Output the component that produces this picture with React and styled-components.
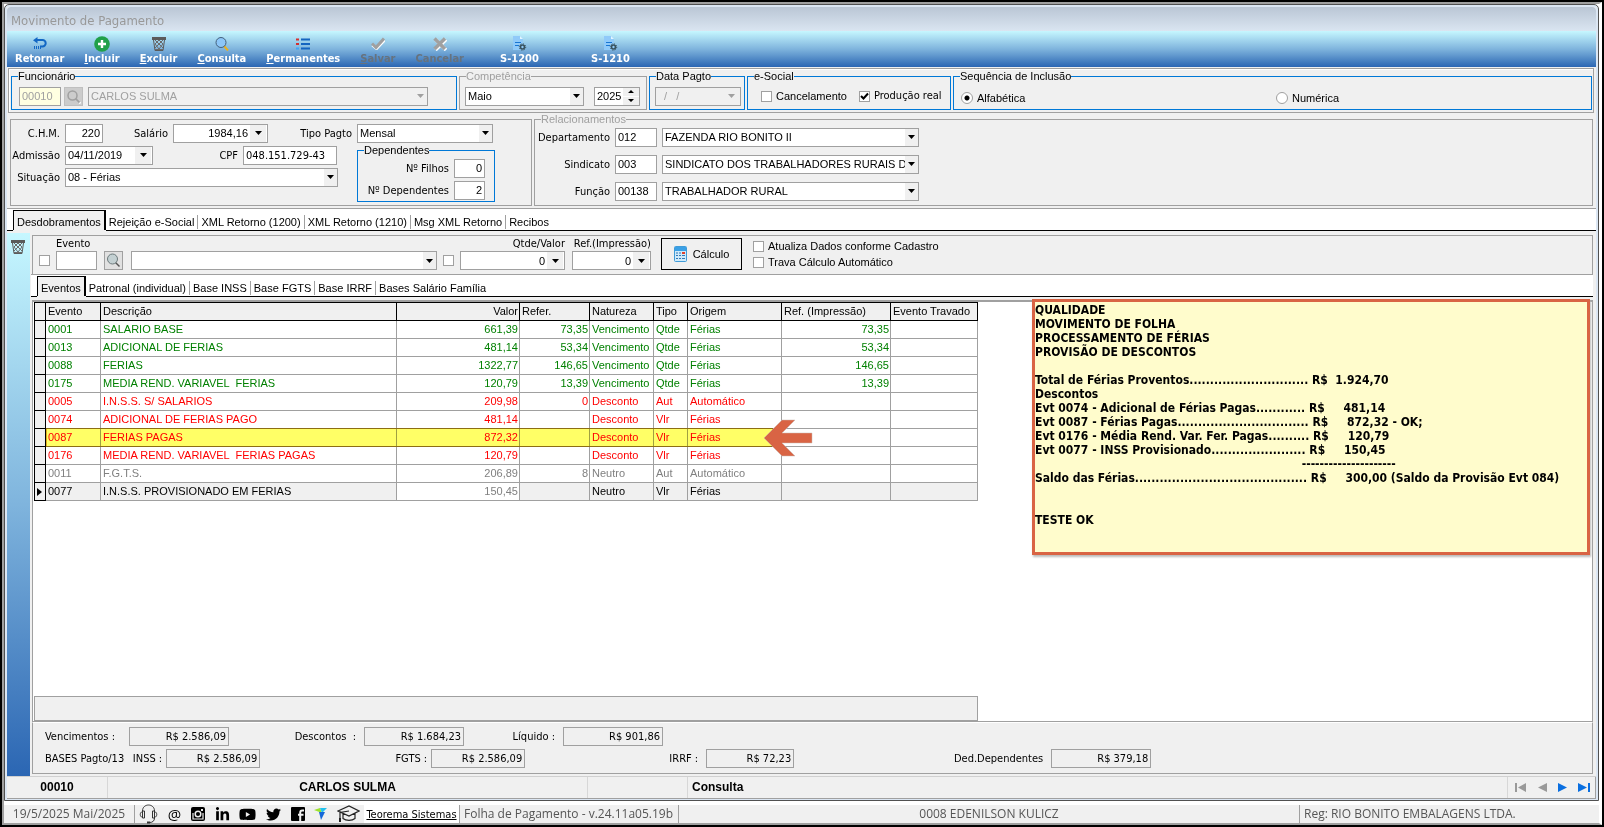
import React from "react";
import styled, { createGlobalStyle, css } from "styled-components";
import { FaLinkedinIn, FaYoutube, FaTwitter } from "react-icons/fa";

const TAHOMA = `"DejaVu Sans Condensed", "DejaVu Sans", sans-serif`;
const SYSTEM = `"Liberation Sans", Arial, sans-serif`;

const GRAY = "#a0a0a0";
const FACE = "#f0f0f0";
const BLUE = "#0078d7";

const actions = [
  { text: "Retornar", icon: "back" },
  { text: "Incluir", icon: "plus", underlined: true },
  { text: "Excluir", icon: "trash", underlined: true },
  { text: "Consulta", icon: "search", underlined: true },
  { text: "Permanentes", icon: "list", underlined: true },
  { text: "Salvar", icon: "check", underlined: true, disabled: true },
  { text: "Cancelar", icon: "cross", disabled: true },
  { text: "S-1200", icon: "doc", wide: true },
  { text: "S-1210", icon: "doc", wide: true },
];

const pageTabs = [
  "Desdobramentos",
  "Rejeição e-Social",
  "XML Retorno (1200)",
  "XML Retorno (1210)",
  "Msg XML Retorno",
  "Recibos",
];

const eventTabs = [
  "Eventos",
  "Patronal (individual)",
  "Base INSS",
  "Base FGTS",
  "Base IRRF",
  "Bases Salário Família",
];

const columns = [
  { name: "", width: 11 },
  { name: "Evento", width: 55 },
  { name: "Descrição", width: 296 },
  { name: "Valor", width: 123, right: true },
  { name: "Refer.", width: 70 },
  { name: "Natureza", width: 64 },
  { name: "Tipo", width: 34 },
  { name: "Origem", width: 94 },
  { name: "Ref. (Impressão)", width: 109 },
  { name: "Evento Travado", width: 87 },
];

const rows = [
  ["green", "0001", "SALARIO BASE", "661,39", "73,35", "Vencimento", "Qtde", "Férias", "73,35"],
  ["green", "0013", "ADICIONAL DE FERIAS", "481,14", "53,34", "Vencimento", "Qtde", "Férias", "53,34"],
  ["green", "0088", "FERIAS", "1322,77", "146,65", "Vencimento", "Qtde", "Férias", "146,65"],
  ["green", "0175", "MEDIA REND. VARIAVEL  FERIAS", "120,79", "13,39", "Vencimento", "Qtde", "Férias", "13,39"],
  ["red", "0005", "I.N.S.S. S/ SALARIOS", "209,98", "0", "Desconto", "Aut", "Automático", ""],
  ["red", "0074", "ADICIONAL DE FERIAS PAGO", "481,14", "", "Desconto", "Vlr", "Férias", ""],
  ["red", "0087", "FERIAS PAGAS", "872,32", "", "Desconto", "Vlr", "Férias", ""],
  ["red", "0176", "MEDIA REND. VARIAVEL  FERIAS PAGAS", "120,79", "", "Desconto", "Vlr", "Férias", ""],
  ["gray", "0011", "F.G.T.S.", "206,89", "8", "Neutro", "Aut", "Automático", ""],
  ["black", "0077", "I.N.S.S. PROVISIONADO EM FERIAS", "150,45", "", "Neutro", "Vlr", "Férias", ""],
];

const note = `QUALIDADE
MOVIMENTO DE FOLHA
PROCESSAMENTO DE FÉRIAS
PROVISÃO DE DESCONTOS

Total de Férias Proventos............................. R$  1.924,70
Descontos
Evt 0074 - Adicional de Férias Pagas............ R$     481,14
Evt 0087 - Férias Pagas................................ R$     872,32 - OK;
Evt 0176 - Média Rend. Var. Fer. Pagas.......... R$     120,79
Evt 0077 - INSS Provisionado....................... R$     150,45
                                                                       ---------------------
Saldo das Férias.......................................... R$     300,00 (Saldo da Provisão Evt 084)


TESTE OK`;

const Icon = ({ name }) => {
  switch (name) {
    case "back":
      return (
        <svg width="16" height="14" viewBox="0 0 16 14">
          <path d="M4 3h6.500a3.200 3.200 0 0 1 0 6.400H8" fill="none" stroke="#1267c4" strokeWidth="2" />
          <path d="M5.500 0v6.500L1 3.200z" fill="#1267c4" />
          <path d="M2.500 9v3M4.500 9v3M6.500 9v3M8.500 9v3" stroke="#1267c4" />
        </svg>
      );
    case "plus":
      return (
        <svg width="16" height="16" viewBox="0 0 16 16">
          <circle cx="8" cy="8" r="7.800" fill="#21a04a" />
          <path d="M8 4v8M4 8h8" stroke="#fff" strokeWidth="2.400" />
        </svg>
      );
    case "trash":
      return (
        <svg width="14" height="14" viewBox="0 0 14 14">
          <path d="M0 0h14v3H0z" fill="#5a5a5a" />
          <path d="M1.500 3l1.500 10.500h8L12.500 3" fill="none" stroke="#5a5a5a" />
          <path d="M3 3l8 8M11 3l-8 8M7 3l4 4-4 5-4-5zM3 12.500h8" fill="none" stroke="#6a6a6a" />
        </svg>
      );
    case "search":
      return (
        <svg width="14" height="14" viewBox="0 0 14 14">
          <path d="M9 9l4 4.500" stroke="#e8b023" strokeWidth="2" />
          <circle cx="6" cy="5.500" r="5" fill="#8cc6f8" stroke="#44607c" />
        </svg>
      );
    case "list":
      return (
        <svg width="14" height="12" viewBox="0 0 14 12">
          <path d="M0 1.500h3M0 6h3" stroke="#d32f2f" strokeWidth="2" />
          <path d="M0 10.500h3" stroke="#42a5f5" strokeWidth="2" />
          <path d="M5 1.500h9M5 6h9M5 10.500h9" stroke="#1565c0" strokeWidth="2" />
        </svg>
      );
    case "check":
      return (
        <svg width="14" height="13" viewBox="0 0 14 13">
          <path d="M1.500 8l4 3.500L13.500 3" fill="none" stroke="#fff" strokeWidth="3" />
          <path d="M1 6.500l4 4L13 1.500" fill="none" stroke="#a0a0a0" strokeWidth="3" />
        </svg>
      );
    case "cross":
      return (
        <svg width="14" height="14" viewBox="0 0 14 14">
          <path d="M2.500 2.500l10.500 10.500M13 2.500L2.500 13" stroke="#fff" strokeWidth="3.500" />
          <path d="M1.500 1.500l10.500 10.500M12 1.500L1.500 12" stroke="#a0a0a0" strokeWidth="3.500" />
        </svg>
      );
    case "doc":
      return (
        <svg width="14" height="15" viewBox="0 0 14 15">
          <path d="M0 0h7l3 3v11H0z" fill="#90caf9" />
          <path d="M7 0l3 3H7z" fill="#e1f5fe" />
          <path d="M2 6.500h6M2 9.500h4" stroke="#1976d2" strokeWidth="1.200" />
          <circle cx="9.500" cy="11" r="2" fill="none" stroke="#37515d" strokeWidth="1.600" />
          <circle cx="9.500" cy="11" r="3.200" fill="none" stroke="#37515d" strokeDasharray="1.200 1.300" />
        </svg>
      );
    case "lens":
      return (
        <svg width="15" height="15" viewBox="0 0 15 15">
          <path d="M9.500 9.500l4 4" stroke="#555" strokeWidth="1.500" />
          <circle cx="6.500" cy="6" r="5" fill="#c3d0d2" stroke="#6d7a7c" />
        </svg>
      );
    case "lensOff":
      return (
        <svg width="15" height="15" viewBox="0 0 15 15">
          <path d="M10.500 10.500l4 4" stroke="#fff" strokeWidth="2" />
          <path d="M9.500 9.500l4 4" stroke="#a0a0a0" strokeWidth="2" />
          <circle cx="6.500" cy="6.500" r="4.500" fill="#ccc" stroke="#a0a0a0" strokeWidth="1.500" />
        </svg>
      );
    case "calc":
      return (
        <svg width="13" height="16" viewBox="0 0 13 16">
          <rect x="0.500" y="0.500" width="12" height="15" rx="1" fill="#cfeafa" stroke="#3f9bd8" />
          <path d="M1 1h11v4H1z" fill="#3aa0e6" />
          <path d="M2 7h2M5 7h2M2 9.500h2M5 9.500h2M2 12.500h2M5 12.500h2M8 9.500h3M8 12.500h3" stroke="#3178b8" />
          <path d="M8 7h3" stroke="#e0402c" strokeWidth="2" />
        </svg>
      );
    case "headset":
      return (
        <svg width="19" height="20" viewBox="0 0 19 20" fill="none" stroke="#333">
          <path d="M3.500 7c0-8 12-8 12 0M5.500 7v7h-2V7zM13.500 7v7h2V7zM3.500 7.500c-3 1-3 5 0 6M15.500 7.500c3 1 3 5 0 6M15.500 14c0 3-2 4.500-5 4.500" />
          <path d="M8 18.500h3" strokeWidth="2" />
        </svg>
      );
    case "instagram":
      return (
        <svg width="14" height="14" viewBox="0 0 14 14">
          <rect width="14" height="14" rx="2" />
          <path d="M2 6v6h10V6" fill="none" stroke="#f0f0f0" strokeWidth="1.200" />
          <circle cx="7" cy="7" r="2.800" stroke="#f0f0f0" strokeWidth="1.500" />
          <path d="M10 2h2v2h-2z" fill="#f0f0f0" />
        </svg>
      );
    case "facebook":
      return (
        <svg width="14" height="14" viewBox="0 0 14 14">
          <rect width="14" height="14" rx="1" />
          <path d="M9.200 14V5.500q0-2 2-2H13M7 7.800h5.500" fill="none" stroke="#f0f0f0" strokeWidth="2" />
        </svg>
      );
    case "bird":
      return (
        <svg width="13" height="12" viewBox="0 0 13 12">
          <path d="M0 2l6-2 2 5z" fill="#9be22d" />
          <path d="M6 0h7L8 5z" fill="#22c1ee" />
          <path d="M5 4h6l-4 8z" fill="#1668d8" />
        </svg>
      );
    case "cap":
      return (
        <svg width="23" height="18" viewBox="0 0 23 18" fill="none" stroke="#222" strokeWidth="1.200">
          <path d="M1 6l11-5 10 5-10 5zM6 8.500v5c3 2.500 9 2.500 12 0v-5M12 6L3 7.500V14" />
          <path d="M3 13v4" strokeWidth="2" />
        </svg>
      );
    default:
      return null;
  }
};

const Arrow = ({ off }) => (
  <svg width="7" height="4" viewBox="0 0 7 4">
    <path d="M0 0h7L3.500 4z" fill={off ? GRAY : "#000"} />
  </svg>
);

const Combo = ({ id, value, width, disabled, label }) => (
  <ComboBox $width={width} $off={disabled}>
    <select id={id} disabled={disabled} aria-label={label}>
      <option>{value}</option>
    </select>
    <span>
      <Arrow off={disabled} />
    </span>
  </ComboBox>
);

const Picker = ({ id, value, width, disabled, right, label }) => (
  <PickerBox $width={width} $off={disabled} $right={right}>
    <input id={id} defaultValue={value} disabled={disabled} aria-label={label} />
    <button disabled={disabled} aria-label="Abrir">
      <Arrow off={disabled} />
    </button>
  </PickerBox>
);

const Tabs = ({ items }) => (
  <TabBar role="tablist">
    {items.map((text, i) => (
      <Tab key={text} role="tab" aria-selected={i === 0} $active={i === 0}>
        <span>{text}</span>
      </Tab>
    ))}
  </TabBar>
);

const Total = ({ id, label, value, labelWidth, width, gap = 8 }) => (
  <TotalItem $labelWidth={labelWidth} $gap={gap}>
    <label htmlFor={id}>{label}</label>
    <TextBox id={id} readOnly value={value} $width={width} $right $face $tahoma />
  </TotalItem>
);

export default function App() {
  return (
    <Desktop>
      <GlobalStyle />
      <Shell>
        <Window>
          <TitleBar>Movimento de Pagamento</TitleBar>
          <ToolBar>
            {actions.map(({ text, icon, underlined, disabled, wide }) => (
              <ToolButton key={text} disabled={disabled} $wide={wide}>
                <i>
                  <Icon name={icon} />
                </i>
                <span>
                  {underlined ? <u>{text[0]}</u> : text[0]}
                  {text.slice(1)}
                </span>
              </ToolButton>
            ))}
          </ToolBar>

          <Header>
            <Group $width={446} $blue>
              <legend>Funcionário</legend>
              <Line $tall $pad={7} $gap={3}>
                <TextBox aria-label="Código" defaultValue="00010" disabled $width={42} $cream />
                <IconButton disabled aria-label="Pesquisar">
                  <Icon name="lensOff" />
                </IconButton>
                <Combo label="Funcionário" value="CARLOS SULMA" width={340} disabled />
              </Line>
            </Group>
            <Group $width={188} $muted>
              <legend>Competência</legend>
              <Line $tall $pad={5} $gap={10}>
                <Combo label="Mês" value="Maio" width={119} />
                <YearBox>
                  <input aria-label="Ano" defaultValue="2025" />
                  <svg width="16" height="17" viewBox="0 0 16 17">
                    <path d="M0 0h16v8H0zM0 9h16v8H0z" fill={FACE} />
                    <path d="M5 5h6L8 2zM5 11h6l-3 3z" />
                  </svg>
                </YearBox>
              </Line>
            </Group>
            <Group $width={96} $blue>
              <legend>Data Pagto</legend>
              <Line $tall $pad={5}>
                <Picker label="Data Pagto" value="  /   /" width={86} disabled />
              </Line>
            </Group>
            <Group $width={204} $blue>
              <legend>e-Social</legend>
              <Line $tall $pad={13} $gap={12}>
                <Check>
                  <input type="checkbox" />
                  Cancelamento
                </Check>
                <Check $tahoma>
                  <input type="checkbox" defaultChecked />
                  Produção real
                </Check>
              </Line>
            </Group>
            <Group $blue $grow>
              <legend>Sequência de Inclusão</legend>
              <RadioLine>
                <Check>
                  <input type="radio" name="seq" defaultChecked />
                  Alfabética
                </Check>
                <Check>
                  <input type="radio" name="seq" />
                  Numérica
                </Check>
              </RadioLine>
            </Group>
          </Header>

          <Details>
            <Contract>
              <Line $gap={5}>
                <Label htmlFor="chm" $width={49}>C.H.M.</Label>
                <TextBox id="chm" defaultValue="220" $width={38} $right />
                <Label htmlFor="salario" $width={60}>Salário</Label>
                <Picker id="salario" value="1984,16" width={95} right />
                <Label htmlFor="tipo" $width={79}>Tipo Pagto</Label>
                <Combo id="tipo" value="Mensal" width={136} />
              </Line>
              <ContractBody>
                <Stack>
                  <Line $gap={5}>
                    <Label htmlFor="admissao" $width={49}>Admissão</Label>
                    <Picker id="admissao" value="04/11/2019" width={88} />
                    <Label htmlFor="cpf" $width={80}>CPF</Label>
                    <TextBox id="cpf" defaultValue="048.151.729-43" $width={94} $tahoma />
                  </Line>
                  <Line $gap={5}>
                    <Label htmlFor="situacao" $width={49}>Situação</Label>
                    <Combo id="situacao" value="08 - Férias" width={273} />
                  </Line>
                </Stack>
                <Group $width={138} $blue>
                  <legend>Dependentes</legend>
                  <Stack>
                    <Line $gap={5}>
                      <Label htmlFor="filhos" $width={91}>Nº Filhos</Label>
                      <TextBox id="filhos" defaultValue="0" $width={31} $right />
                    </Line>
                    <Line $gap={5}>
                      <Label htmlFor="deps" $width={91}>Nº Dependentes</Label>
                      <TextBox id="deps" defaultValue="2" $width={31} $right />
                    </Line>
                  </Stack>
                </Group>
              </ContractBody>
            </Contract>
            <Group $muted $grow>
              <legend>Relacionamentos</legend>
              <Relations>
                <Line $gap={5}>
                  <Label htmlFor="depto" $width={75}>Departamento</Label>
                  <TextBox id="depto" defaultValue="012" $width={42} />
                  <Combo label="Departamento" value="FAZENDA RIO BONITO II" width={257} />
                </Line>
                <Line $gap={5}>
                  <Label htmlFor="sind" $width={75}>Sindicato</Label>
                  <TextBox id="sind" defaultValue="003" $width={42} />
                  <Combo label="Sindicato" value="SINDICATO DOS TRABALHADORES RURAIS D" width={257} />
                </Line>
                <Line $gap={5}>
                  <Label htmlFor="func" $width={75}>Função</Label>
                  <TextBox id="func" defaultValue="00138" $width={42} />
                  <Combo label="Função" value="TRABALHADOR RURAL" width={257} />
                </Line>
              </Relations>
            </Group>
          </Details>

          <Tabs items={pageTabs} />
          <Body>
            <Rail>
              <button aria-label="Excluir evento">
                <Icon name="trash" />
              </button>
            </Rail>
            <Main>
              <Filter>
                <Tick type="checkbox" aria-label="Filtrar evento" />
                <Field $width={41}>
                  <label htmlFor="evento">Evento</label>
                  <TextBox id="evento" $width={41} />
                </Field>
                <IconButton aria-label="Pesquisar evento">
                  <Icon name="lens" />
                </IconButton>
                <Combo label="Evento" value="" width={306} />
                <Tick type="checkbox" aria-label="Filtrar valor" />
                <Field $width={105} $right>
                  <label htmlFor="qtde">Qtde/Valor</label>
                  <Picker id="qtde" value="0" width={105} right />
                </Field>
                <Field $width={79} $right>
                  <label htmlFor="ref">Ref.(Impressão)</label>
                  <Picker id="ref" value="0" width={79} right />
                </Field>
                <CalcButton>
                  <Icon name="calc" />
                  Cálculo
                </CalcButton>
                <Options>
                  <Check>
                    <input type="checkbox" />
                    Atualiza Dados conforme Cadastro
                  </Check>
                  <Check>
                    <input type="checkbox" />
                    Trava Cálculo Automático
                  </Check>
                </Options>
              </Filter>
              <Tabs items={eventTabs} />

              <GridArea>
                <Table>
                  <colgroup>
                    {columns.map(({ name, width }) => (
                      <col key={name} width={width} />
                    ))}
                  </colgroup>
                  <thead>
                    <tr>
                      {columns.map(({ name, right }) => (
                        <Th key={name} $right={right}>{name}</Th>
                      ))}
                    </tr>
                  </thead>
                  <tbody>
                    {rows.map(([color, code, text, value, ref, kind, type, origin, print]) => {
                      const current = code === "0077";
                      return (
                        <Row key={code} $color={color} $current={current}>
                          <td>
                            {current && (
                              <svg width="5" height="8" viewBox="0 0 5 8">
                                <path d="M0 0l5 4-5 4z" />
                              </svg>
                            )}
                          </td>
                          <td>{code}</td>
                          <td>{text}</td>
                          <td>{value}</td>
                          <td>{ref}</td>
                          <td>{kind}</td>
                          <td>{type}</td>
                          <td>{origin}</td>
                          <td>{print}</td>
                          <td />
                        </Row>
                      );
                    })}
                  </tbody>
                </Table>
                <Marker />
                <Pointer width="50" height="39" viewBox="0 0 50 39">
                  <path d="M0 19L18 1h13L18 14h30v10H18l13 13H18z" fill="#d96444" stroke="#c9b9b2" strokeWidth="0.500" />
                </Pointer>
                <Note>{note}</Note>
                <GridFooter />
              </GridArea>

              <Totals>
                <TotalLine>
                  <Total id="venc" label="Vencimentos :" value="R$ 2.586,09" labelWidth={84} width={100} gap={14} />
                  <Total id="desc" label="Descontos  :" value="R$ 1.684,23" labelWidth={135} width={100} />
                  <Total id="liq" label="Líquido :" value="R$ 901,86" labelWidth={99} width={100} />
                </TotalLine>
                <TotalLine>
                  <span>BASES Pagto/13</span>
                  <Total id="inss" label="INSS :" value="R$ 2.586,09" labelWidth={42} width={94} gap={4} />
                  <Total id="fgts" label="FGTS :" value="R$ 2.586,09" labelWidth={171} width={94} gap={4} />
                  <Total id="irrf" label="IRRF :" value="R$ 72,23" labelWidth={181} width={88} />
                  <Total id="ded" label="Ded.Dependentes" value="R$ 379,18" labelWidth={257} width={100} />
                </TotalLine>
              </Totals>
            </Main>
          </Body>

          <Status>
            <StatusCell $width={101}>00010</StatusCell>
            <StatusCell $width={480}>CARLOS SULMA</StatusCell>
            <StatusCell $width={100} />
            <StatusCell $grow>Consulta</StatusCell>
            <Navigator>
              <button disabled aria-label="Primeiro">
                <svg width="12" height="9" viewBox="0 0 12 9">
                  <path d="M0 0h2v9H0zM11 0v9L3 4.500z" />
                </svg>
              </button>
              <button disabled aria-label="Anterior">
                <svg width="9" height="9" viewBox="0 0 9 9">
                  <path d="M9 0v9L0 4.500z" />
                </svg>
              </button>
              <button aria-label="Próximo">
                <svg width="9" height="9" viewBox="0 0 9 9">
                  <path d="M0 0v9l9-4.500z" />
                </svg>
              </button>
              <button aria-label="Último">
                <svg width="12" height="9" viewBox="0 0 12 9">
                  <path d="M10 0h2v9h-2zM0 0v9l9-4.500z" />
                </svg>
              </button>
            </Navigator>
          </Status>
        </Window>

        <Footer>
          <FootCell $width={131}>19/5/2025 Mai/2025</FootCell>
          <Social>
            <a href="#suporte" aria-label="Suporte"><Icon name="headset" /></a>
            <a href="#email">@</a>
            <a href="#instagram" aria-label="Instagram"><Icon name="instagram" /></a>
            <a href="#linkedin" aria-label="LinkedIn"><FaLinkedinIn size={15} /></a>
            <a href="#youtube" aria-label="YouTube"><FaYoutube size={17} /></a>
            <a href="#twitter" aria-label="Twitter"><FaTwitter size={15} /></a>
            <a href="#facebook" aria-label="Facebook"><Icon name="facebook" /></a>
            <a href="#teorema" aria-label="Teorema"><Icon name="bird" /></a>
            <a href="#cursos" aria-label="Cursos"><Icon name="cap" /></a>
          </Social>
          <SiteCell>
            <a href="#site">Teorema Sistemas</a>
          </SiteCell>
          <FootCell $width={219} $left>Folha de Pagamento - v.24.11a05.19b</FootCell>
          <FootCell $grow>0008 EDENILSON KULICZ</FootCell>
          <FootCell $width={299} $left>Reg: RIO BONITO EMBALAGENS LTDA.</FootCell>
        </Footer>
      </Shell>
    </Desktop>
  );
}

const GlobalStyle = createGlobalStyle`
  * {
    box-sizing: border-box;
  }
  body {
    margin: 0;
    background: #000;
    font-family: ${TAHOMA};
    font-size: 11px;
    line-height: 13px;
    color: #000;
  }
  input, select, button {
    font-family: ${SYSTEM};
    font-size: 11px;
    margin: 0;
    color: #000;
    border-radius: 0;
    outline: none;
  }
  svg {
    display: block;
    flex: none;
  }
`;

const Desktop = styled.div`
  min-height: 100vh;
  display: flex;
  padding: 2px;
`;

const Shell = styled.div`
  flex: 1;
  min-width: 0;
  display: flex;
  flex-direction: column;
  background: #fff;
  border: 2px solid ${GRAY};
  border-right-color: #fff;
  border-right-width: 3px;
`;

const Window = styled.div`
  flex: 1;
  display: flex;
  flex-direction: column;
  background: ${FACE};
  border: 1px solid #505050;
  border-radius: 5px 5px 0 0;
  box-shadow: inset 0 0 0 2px #dbe6f3;
  padding: 2px 2px 1px;
`;

const TitleBar = styled.div`
  height: 24px;
  padding: 7px 4px 0;
  border-radius: 4px 4px 0 0;
  background: linear-gradient(#bac6d5, #dae5f1);
  color: #999;
  font-size: 13px;
  line-height: 14px;
`;

const ToolBar = styled.div`
  height: 36px;
  display: flex;
  background: linear-gradient(#c6f7ff, #7fb4dd 50%, #2b66b3);
`;

const ToolButton = styled.button`
  min-width: ${(p) => (p.$wide ? 91 : 0)}px;
  display: flex;
  flex-direction: column;
  align-items: center;
  padding: 4px 10px 0;
  border: none;
  background: transparent;
  color: ${(p) => (p.disabled ? "#66727e" : "#fff")};
  font: bold 11px/13px ${TAHOMA};
  i {
    height: 17px;
    display: flex;
    align-items: center;
  }
  &:first-child {
    padding-left: 8px;
  }
`;

const Header = styled.div`
  display: flex;
  gap: 2px;
  margin: 1px 2px 0 1px;
  padding: 1px 1px 2px 2px;
  border: 1px solid ${GRAY};
  box-shadow: inset 1px 1px 0 #fff;
`;

const Group = styled.fieldset`
  width: ${(p) => (p.$grow ? "auto" : `${p.$width}px`)};
  flex: ${(p) => (p.$grow ? "1" : "none")};
  min-width: 0;
  margin: 0;
  padding: 0;
  border: 1px solid ${(p) => (p.$blue ? BLUE : GRAY)};
  legend {
    margin-left: 6px;
    padding: 0;
    color: ${(p) => (p.$muted ? GRAY : "#000")};
    font: 11px/13px ${SYSTEM};
  }
`;

const Line = styled.div`
  display: flex;
  align-items: center;
  gap: ${(p) => p.$gap || 0}px;
  padding-left: ${(p) => p.$pad || 0}px;
  height: ${(p) => (p.$tall ? 26 : 22)}px;
`;

const Stack = styled.div`
  display: flex;
  flex-direction: column;
`;

const TextBox = styled.input`
  width: ${(p) => p.$width}px;
  height: 19px;
  padding: 0 2px;
  border: 1px solid ${GRAY};
  background: ${(p) => (p.$cream ? "#ffffe1" : p.$face ? FACE : "#fff")};
  text-align: ${(p) => (p.$right ? "right" : "left")};
  ${(p) =>
    p.$tahoma &&
    css`
      font: 11px ${TAHOMA};
    `}
  &:disabled {
    color: ${GRAY};
  }
`;

const IconButton = styled.button`
  width: 19px;
  height: 19px;
  display: flex;
  align-items: center;
  justify-content: center;
  padding: 0;
  border: 1px solid ${(p) => (p.disabled ? "#bfbfbf" : GRAY)};
  background: ${(p) => (p.disabled ? "#ccc" : "#e1e1e1")};
  && {
    margin-right: 2px;
  }
`;

const ComboBox = styled.span`
  position: relative;
  flex: none;
  width: ${(p) => p.$width}px;
  height: 19px;
  select {
    display: block;
    width: 100%;
    height: 100%;
    appearance: none;
    padding: 0 13px 0 2px;
    border: 1px solid ${GRAY};
    background: ${(p) => (p.$off ? FACE : "#fff")};
    opacity: 1;
    color: ${(p) => (p.$off ? GRAY : "#000")};
  }
  span {
    position: absolute;
    top: 1px;
    right: 1px;
    bottom: 1px;
    width: 13px;
    display: flex;
    align-items: center;
    justify-content: center;
    background: ${FACE};
    pointer-events: none;
  }
`;

const PickerBox = styled.span`
  flex: none;
  display: flex;
  width: ${(p) => p.$width}px;
  height: 19px;
  padding-right: 1px;
  border: 1px solid ${GRAY};
  background: ${(p) => (p.$off ? FACE : "#fff")};
  input {
    flex: 1;
    min-width: 0;
    padding: 0 2px;
    border: none;
    background: transparent;
    color: ${(p) => (p.$off ? GRAY : "#000")};
    text-align: ${(p) => (p.$right ? "right" : "left")};
  }
  button {
    width: 16px;
    display: flex;
    align-items: center;
    justify-content: center;
    padding: 0;
    border: none;
    background: ${FACE};
  }
`;

const YearBox = styled.span`
  display: flex;
  width: 46px;
  height: 19px;
  border: 1px solid ${GRAY};
  background: #fff;
  input {
    flex: 1;
    min-width: 0;
    padding: 0 0 0 2px;
    border: none;
  }
`;

const tick = css`
  appearance: none;
  flex: none;
  width: 11px;
  height: 11px;
  margin: 0;
  border: 1px solid ${GRAY};
  background: #fff;
  &:checked {
    background: #fff
      url("data:image/svg+xml,%3Csvg xmlns='http://www.w3.org/2000/svg' viewBox='0 0 9 9'%3E%3Cpath d='M1 4l2.500 2.500L8 1.500' fill='none' stroke='%23000' stroke-width='2'/%3E%3C/svg%3E");
  }
`;

const Tick = styled.input`
  ${tick}
  && {
    margin-bottom: 4px;
  }
`;

const Check = styled.label`
  display: flex;
  align-items: center;
  gap: 4px;
  font: 11px/16px ${(p) => (p.$tahoma ? TAHOMA : SYSTEM)};
  white-space: nowrap;
  input {
    ${tick}
  }
  input[type="radio"] {
    width: 12px;
    height: 12px;
    border-radius: 50%;
    &:checked {
      background: radial-gradient(circle, #000 2px, #fff 3px);
    }
  }
`;

const RadioLine = styled.div`
  display: grid;
  grid-template-columns: 1fr 1fr;
  align-items: center;
  height: 26px;
  padding: 4px 0 0 7px;
`;

const Label = styled.label`
  width: ${(p) => p.$width}px;
  display: flex;
  justify-content: flex-end;
  white-space: nowrap;
`;

const Details = styled.div`
  display: flex;
  gap: 2px;
  margin: 0 3px;
  padding: 0 0 2px;
`;

const Contract = styled.div`
  width: 522px;
  margin-top: 6px;
  padding: 2px 0 0;
  border: 1px solid ${GRAY};
`;

const ContractBody = styled.div`
  display: flex;
  align-items: flex-start;
  gap: 19px;
`;

const Relations = styled.div`
  display: flex;
  flex-direction: column;
  gap: 5px;
  padding-bottom: 3px;
`;

const TabBar = styled.div`
  display: flex;
  align-items: flex-end;
  height: 23px;
  padding-left: 6px;
  border-top: 1px solid ${GRAY};
  border-bottom: 1px solid #000;
  background: #fff;
`;

const Tab = styled.button`
  height: 20px;
  padding: 3px 0 0;
  border: none;
  background: transparent;
  white-space: pre;
  span {
    display: block;
    padding: 0 3px;
    line-height: 14px;
    border-right: 1px solid ${GRAY};
  }
  &:last-child span {
    border-right: none;
  }
  ${(p) =>
    p.$active &&
    css`
      border: 1px solid #000;
      border-bottom: none;
      border-right-width: 2px;
      background: ${FACE};
      box-shadow: 0 1px 0 ${FACE};
      span {
        border-right: none;
      }
    `}
`;

const Body = styled.div`
  flex: 1;
  display: flex;
  padding-top: 2px;
`;

const Rail = styled.div`
  width: 23px;
  background: linear-gradient(#c6f7ff, #7fb4dd 50%, #2b66b3);
  button {
    padding: 7px 4px;
    border: none;
    background: transparent;
  }
`;

const Main = styled.div`
  flex: 1;
  min-width: 0;
  display: flex;
  flex-direction: column;
  padding: 2px 3px 2px 1px;
`;

const Filter = styled.div`
  display: flex;
  align-items: flex-end;
  gap: 6px;
  height: 39px;
  margin-left: 1px;
  padding: 0 0 4px 6px;
  border: 1px solid ${GRAY};
  border-bottom: none;
`;

const Field = styled.span`
  display: flex;
  flex-direction: column;
  align-items: ${(p) => (p.$right ? "flex-end" : "flex-start")};
  gap: 1px;
  width: ${(p) => p.$width}px;
  margin-right: 1px;
  white-space: nowrap;
`;

const CalcButton = styled.button`
  width: 81px;
  height: 32px;
  display: flex;
  align-items: center;
  justify-content: center;
  gap: 6px;
  padding: 0;
  border: 1px solid #000;
  background: ${FACE};
  && {
    margin-left: 3px;
  }
`;

const Options = styled.div`
  margin-left: 5px;
`;

const GridArea = styled.div`
  position: relative;
  flex: 1;
  display: flex;
  flex-direction: column;
  justify-content: space-between;
  margin-top: 3px;
  margin-left: 1px;
  border: 1px solid ${GRAY};
  border-top-width: 2px;
  background: #fff;
`;

const Table = styled.table`
  width: 944px;
  margin-left: 1px;
  table-layout: fixed;
  border-collapse: separate;
  border-spacing: 0;
  border-top: 1px solid #000;
  border-left: 1px solid #000;
  font: 11px/17px ${SYSTEM};
  white-space: pre;
`;

const Th = styled.th`
  height: 18px;
  padding: 0 1px 0 2px;
  border-right: 1px solid #000;
  border-bottom: 1px solid #000;
  background: ${FACE};
  font-weight: normal;
  text-align: ${(p) => (p.$right ? "right" : "left")};
`;

const textColors = { green: "#008000", red: "#f00", gray: "#808080", black: "#000" };

const Row = styled.tr`
  color: ${(p) => textColors[p.$color]};
  td {
    height: 18px;
    padding: 0 1px 0 2px;
    border-right: 1px solid ${GRAY};
    border-bottom: 1px solid ${GRAY};
    background: ${(p) => (p.$current ? FACE : "#fff")};
  }
  td:first-child {
    border-color: #000;
    background: ${FACE};
  }
  td:nth-child(4) {
    background: #fff;
    color: ${(p) => (p.$current ? "#808080" : "inherit")};
  }
  td:nth-child(4),
  td:nth-child(5),
  td:nth-child(9) {
    text-align: right;
  }
`;

/* highlighter stroke over the FERIAS PAGAS row */
const Marker = styled.div`
  position: absolute;
  left: 13px;
  top: 126px;
  width: 727px;
  height: 19px;
  border: 1px solid #e0b020;
  background: #ff6;
  mix-blend-mode: multiply;
`;

const Pointer = styled.svg`
  position: absolute;
  left: 731px;
  top: 117px;
`;

const Note = styled.div`
  position: absolute;
  top: -3px;
  right: 2px;
  width: 558px;
  height: 256px;
  padding: 1px 0;
  border: 3px solid #d96444;
  background: #fffccc;
  box-shadow: 1px 2px 2px #bbb;
  font-size: 12px;
  font-weight: bold;
  line-height: 14px;
  white-space: pre;
`;

const GridFooter = styled.div`
  width: 944px;
  height: 25px;
  margin-left: 1px;
  border: 1px solid ${GRAY};
  background: ${FACE};
`;

const Totals = styled.div`
  display: flex;
  flex-direction: column;
  margin-left: 1px;
  padding: 2px 0 4px 12px;
  border: 1px solid ${GRAY};
  border-top-color: #fff;
`;

const TotalLine = styled.div`
  display: flex;
  align-items: center;
  height: 22px;
`;

const TotalItem = styled.span`
  display: flex;
  align-items: center;
  label {
    width: ${(p) => p.$labelWidth}px;
    padding-right: ${(p) => p.$gap}px;
    display: flex;
    justify-content: flex-end;
    white-space: pre;
  }
`;

const Status = styled.div`
  display: flex;
  height: 23px;
  border-top: 1px solid #d0d0d0;
  border-bottom: 1px solid ${GRAY};
  font: bold 12px/20px "Liberation Sans", sans-serif;
`;

const StatusCell = styled.div`
  width: ${(p) => (p.$grow ? "auto" : `${p.$width}px`)};
  flex: ${(p) => (p.$grow ? "1" : "none")};
  padding: 0 4px;
  border-right: 1px solid #d7d7d7;
  text-align: ${(p) => (p.$grow ? "left" : "center")};
`;

const Navigator = styled.div`
  width: 88px;
  display: flex;
  align-items: center;
  justify-content: space-between;
  padding: 0 5px 0 7px;
  border-right: 1px solid ${GRAY};
  button {
    padding: 0;
    border: none;
    background: transparent;
  }
  path {
    fill: #0a6fe0;
  }
  button:disabled path {
    fill: #999;
  }
`;

const Footer = styled.div`
  display: flex;
  height: 18px;
  margin-top: 4px;
  background: ${FACE};
  color: #555;
  font: 12px/18px "Open Sans", sans-serif;
  white-space: nowrap;
`;

const FootCell = styled.div`
  width: ${(p) => (p.$grow ? "auto" : `${p.$width}px`)};
  flex: ${(p) => (p.$grow ? "1" : "none")};
  padding: 0 4px;
  border-right: 1px solid ${GRAY};
  text-align: ${(p) => (p.$left ? "left" : "center")};
  &:last-child {
    border-right: none;
  }
`;

const Social = styled.div`
  width: 229px;
  display: flex;
  align-items: center;
  justify-content: space-between;
  padding: 0 4px;
  a {
    color: #000;
    font-size: 15px;
    text-decoration: none;
  }
`;

const SiteCell = styled.div`
  width: 96px;
  border-right: 1px solid ${GRAY};
  background: #fff;
  text-align: center;
  a {
    color: #000;
    font: 11px/16px ${TAHOMA};
  }
`;
